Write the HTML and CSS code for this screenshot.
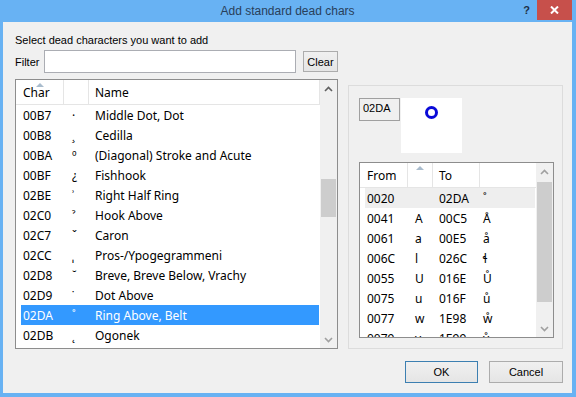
FILE: index.html
```html
<!DOCTYPE html>
<html lang="en">
<head>
    <meta charset="UTF-8">
    <title>Add standard dead chars</title>
    <link rel="stylesheet" href="styles.css">
</head>
<body>
    <div class="window">
        <div class="titlebar">
            <span></span>
            <span class="title">Add standard dead chars</span>
            <div class="caption-buttons">
                <span class="help">?</span>
                <span class="close">
                    <svg width="9" height="8" viewBox="0 0 9 8"><path d="M1 0.5 L8 7.5 M8 0.5 L1 7.5" stroke="#fff" stroke-width="2"/></svg>
                </span>
            </div>
        </div>
        <div class="content">
            <div class="top">
                <div class="left">
                    <p class="intro">Select dead characters you want to add</p>
                    <div class="filter-row">
                        <label for="filter">Filter</label>
                        <input type="text" id="filter">
                        <button class="btn clear">Clear</button>
                    </div>
                    <div class="listview chars">
                        <div class="lv-main">
                            <div class="lv-header">
                                <div class="hcell c1">Char<span class="sort"></span></div>
                                <div class="hcell c2"></div>
                                <div class="hcell c3">Name</div>
                            </div>
                            <div class="lv-rows">
                                <div class="row"><span>00B7</span><span>·</span><span>Middle Dot, Dot</span></div>
                                <div class="row"><span>00B8</span><span>¸</span><span>Cedilla</span></div>
                                <div class="row"><span>00BA</span><span>º</span><span>(Diagonal) Stroke and Acute</span></div>
                                <div class="row"><span>00BF</span><span>¿</span><span>Fishhook</span></div>
                                <div class="row"><span>02BE</span><span>ʾ</span><span>Right Half Ring</span></div>
                                <div class="row"><span>02C0</span><span>ˀ</span><span>Hook Above</span></div>
                                <div class="row"><span>02C7</span><span>ˇ</span><span>Caron</span></div>
                                <div class="row"><span>02CC</span><span>ˌ</span><span>Pros-/Ypogegrammeni</span></div>
                                <div class="row"><span>02D8</span><span>˘</span><span>Breve, Breve Below, Vrachy</span></div>
                                <div class="row"><span>02D9</span><span>˙</span><span>Dot Above</span></div>
                                <div class="row selected"><span>02DA</span><span>˚</span><span>Ring Above, Belt</span></div>
                                <div class="row"><span>02DB</span><span>˛</span><span>Ogonek</span></div>
                            </div>
                        </div>
                        <div class="scrollbar">
                            <div class="arrow up"><svg width="9" height="6" viewBox="0 0 9 6"><path d="M1 5 L4.5 1.5 L8 5" fill="none" stroke="#606060" stroke-width="1.6"/></svg></div>
                            <div class="thumb"></div>
                            <div class="track"></div>
                            <div class="arrow down"><svg width="9" height="6" viewBox="0 0 9 6"><path d="M1 1 L4.5 4.5 L8 1" fill="none" stroke="#a0a0a0" stroke-width="1.6"/></svg></div>
                        </div>
                    </div>
                </div>
                <div class="group">
                    <div class="preview-row">
                        <div class="code-box">02DA</div>
                        <div class="preview"><span class="ring"></span></div>
                    </div>
                    <div class="listview maps">
                        <div class="lv-main">
                            <div class="lv-header">
                                <div class="hcell m1">From</div>
                                <div class="hcell m2"><span class="sort"></span></div>
                                <div class="hcell m3">To</div>
                                <div class="hcell m4"></div>
                            </div>
                            <div class="lv-rows">
                                <div class="row current"><span>0020</span><span></span><span>02DA</span><span>˚</span></div>
                                <div class="row"><span>0041</span><span>A</span><span>00C5</span><span>Å</span></div>
                                <div class="row"><span>0061</span><span>a</span><span>00E5</span><span>å</span></div>
                                <div class="row"><span>006C</span><span>l</span><span>026C</span><span>ɬ</span></div>
                                <div class="row"><span>0055</span><span>U</span><span>016E</span><span>Ů</span></div>
                                <div class="row"><span>0075</span><span>u</span><span>016F</span><span>ů</span></div>
                                <div class="row"><span>0077</span><span>w</span><span>1E98</span><span>ẘ</span></div>
                                <div class="row"><span>0079</span><span>y</span><span>1E99</span><span>ẙ</span></div>
                            </div>
                        </div>
                        <div class="scrollbar">
                            <div class="arrow up"><svg width="9" height="6" viewBox="0 0 9 6"><path d="M1 5 L4.5 1.5 L8 5" fill="none" stroke="#a0a0a0" stroke-width="1.6"/></svg></div>
                            <div class="thumb"></div>
                            <div class="track"></div>
                            <div class="arrow down"><svg width="9" height="6" viewBox="0 0 9 6"><path d="M1 1 L4.5 4.5 L8 1" fill="none" stroke="#a0a0a0" stroke-width="1.6"/></svg></div>
                        </div>
                    </div>
                </div>
            </div>
            <div class="buttons">
                <button class="btn default">OK</button>
                <button class="btn">Cancel</button>
            </div>
        </div>
    </div>
</body>
</html>
```

FILE: styles.css
```css
* {
    box-sizing: border-box;
}

body {
    margin: 0;
    font-family: 'Liberation Sans', Arial, sans-serif;
    font-size: 11px;
    color: #000;
    background: #fff;
}
.window {
    width: 576px;
    height: 397px;
    background-color: #68b2f3;
    padding: 0 4px 4px 3px;
    display: flex;
    flex-direction: column;
}
.titlebar {
    height: 22px;
    display: grid;
    grid-template-columns: 1fr auto 1fr;
    align-items: start;
}
.title {
    font-size: 12px;
    line-height: 22px;
    color: #28405a;
}
.caption-buttons {
    display: flex;
    justify-content: flex-end;
}
.help {
    font-weight: bold;
    font-size: 11px;
    line-height: 20px;
    color: #1d2f44;
    margin-right: 7px;
}
.close {
    width: 35px;
    height: 20px;
    background-color: #c7504b;
    display: flex;
    justify-content: center;
    align-items: center;
}
.content {
    flex: 1;
    background-color: #f0f0f0;
    padding: 11px 9px 0 12px;
}
.top {
    display: flex;
    align-items: flex-end;
}
.left {
    width: 323px;
}
.intro {
    margin: 0;
    line-height: 14px;
}
.filter-row {
    margin-top: 3px;
    display: flex;
    align-items: center;
}
.filter-row label {
    width: 29px;
}
.filter-row input {
    width: 252px;
    height: 23px;
    margin: 0;
    border: 1px solid #abadb3;
    background: #fff;
}
.btn {
    font-family: 'Liberation Sans', Arial, sans-serif;
    font-size: 11px;
    color: #000;
    background: linear-gradient(#f0f0f0, #e5e5e5);
    border: 1px solid #acacac;
    margin: 0;
    padding: 0;
}
.btn.clear {
    width: 35px;
    height: 21px;
    margin-left: 7px;
}

/* list views */
.listview {
    display: flex;
    background: #fff;
    border: 1px solid #8d8d8d;
}
.chars {
    margin-top: 6px;
    height: 270px;
}
.lv-main {
    flex: 1;
    overflow: hidden;
}
.lv-header {
    display: flex;
    height: 25px;
    border-bottom: 1px solid #e5e5e5;
}
.hcell {
    position: relative;
    line-height: 25px;
    font-family: 'Noto Sans', sans-serif;
    font-size: 12px;
    border-right: 1px solid #e5e5e5;
    white-space: nowrap;
}
.hcell.c1 { width: 48px; padding-left: 7px; }
.hcell.c2 { width: 25px; }
.hcell.c3 { flex: 1; padding-left: 6px; }
.hcell.m1 { width: 48px; padding-left: 7px; }
.hcell.m2 { width: 25px; }
.hcell.m3 { width: 47px; padding-left: 6px; }
.hcell.m4 { flex: 1; border-right: none; }
.sort {
    position: absolute;
    top: 3px;
    left: 50%;
    margin-left: -4px;
    width: 0;
    height: 0;
    border-left: 4px solid transparent;
    border-right: 4px solid transparent;
    border-bottom: 4px solid #a9bccd;
}
.row {
    display: grid;
    height: 20px;
    line-height: 21px;
    margin: 0 1px 0 5px;
    padding-left: 2px;
    font-family: 'Noto Sans', sans-serif;
    font-size: 12px;
    white-space: nowrap;
}
.chars .row {
    grid-template-columns: 49px 23px 1fr;
}
.maps .row {
    grid-template-columns: 48px 24px 44px 1fr;
}
.row.selected {
    background-color: #3399ff;
    color: #fff;
}
.row.current {
    background-color: #eeeeee;
}

.scrollbar {
    width: 17px;
    background-color: #f0f0f0;
    display: flex;
    flex-direction: column;
}
.arrow {
    height: 17px;
    display: flex;
    justify-content: center;
    align-items: center;
}
.thumb {
    margin: 0 1px;
    background-color: #cdcdcd;
}
.chars .thumb {
    margin-top: 82px;
    height: 38px;
}
.maps .thumb {
    margin-top: 2px;
    height: 120px;
}
.track {
    flex: 1;
}

/* right group */
.group {
    margin-left: 10px;
    width: 215px;
    height: 264px;
    border: 1px solid #dcdcdc;
    padding: 12px 0 0 10px;
}
.preview-row {
    display: flex;
    align-items: flex-start;
}
.code-box {
    width: 41px;
    height: 23px;
    border: 1px solid #a0a0a0;
    padding: 2px 0 0 3px;
    line-height: 14px;
}
.preview {
    width: 61px;
    height: 55px;
    margin-left: 1px;
    background: #fff;
    display: flex;
    justify-content: center;
    padding-top: 8px;
}
.ring {
    width: 13px;
    height: 13px;
    border: 3px solid #0a0ad8;
    border-radius: 50%;
}
.maps {
    margin-top: 9px;
    width: 195px;
    height: 176px;
}

.buttons {
    display: flex;
    justify-content: flex-end;
    gap: 11px;
    margin-top: 12px;
}
.buttons .btn {
    width: 74px;
    height: 22px;
}
.btn.default {
    width: 73px;
    border-color: #3c7fb1;
}
```
